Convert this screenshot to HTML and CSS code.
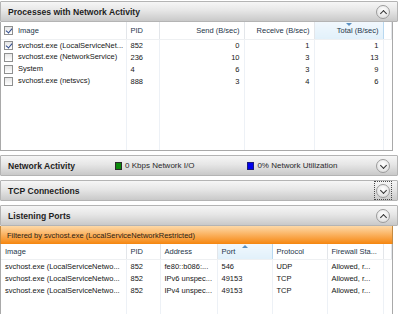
FILE: index.html
```html
<!DOCTYPE html>
<html lang="en">
  <head>
    <meta charset="UTF-8" />
    <title>Network</title>
    <link rel="stylesheet" href="styles.css">
  </head>
  <body>
    <div class="page">
      <div class="bar">
        <span class="title">Processes with Network Activity</span>
        <span class="toggle up"></span>
      </div>
      <div class="panel panel-top">
        <table class="grid grid-proc">
          <colgroup>
            <col style="width:125px"><col style="width:33px"><col style="width:85px"><col style="width:70px"><col style="width:69px"><col>
          </colgroup>
          <tr class="head">
            <th><span class="check on"></span>Image</th>
            <th>PID</th>
            <th class="num">Send (B/sec)</th>
            <th class="num">Receive (B/sec)</th>
            <th class="num sorted down">Total (B/sec)</th>
            <th></th>
          </tr>
          <tr>
            <td><span class="check on"></span>svchost.exe (LocalServiceNet...</td>
            <td>852</td><td class="num">0</td><td class="num">1</td><td class="num">1</td><td></td>
          </tr>
          <tr>
            <td><span class="check"></span>svchost.exe (NetworkService)</td>
            <td>236</td><td class="num">10</td><td class="num">3</td><td class="num">13</td><td></td>
          </tr>
          <tr>
            <td><span class="check"></span>System</td>
            <td>4</td><td class="num">6</td><td class="num">3</td><td class="num">9</td><td></td>
          </tr>
          <tr>
            <td><span class="check"></span>svchost.exe (netsvcs)</td>
            <td>888</td><td class="num">3</td><td class="num">4</td><td class="num">6</td><td></td>
          </tr>
          <tr class="fill">
            <td></td><td></td><td></td><td></td><td></td><td></td>
          </tr>
        </table>
      </div>

      <div class="bar bar-gap">
        <span class="title">Network Activity</span>
        <span class="legend legend-io"><i class="swatch green"></i>0 Kbps Network I/O</span>
        <span class="legend legend-util"><i class="swatch blue"></i>0% Network Utilization</span>
        <span class="toggle down"></span>
      </div>

      <div class="bar bar-gap">
        <span class="title">TCP Connections</span>
        <span class="focus-ring"></span>
        <span class="toggle down"></span>
      </div>

      <div class="bar bar-gap">
        <span class="title">Listening Ports</span>
        <span class="toggle up"></span>
      </div>
      <div class="filter">Filtered by svchost.exe (LocalServiceNetworkRestricted)</div>
      <div class="panel panel-bottom">
        <table class="grid grid-ports">
          <colgroup>
            <col style="width:125px"><col style="width:34px"><col style="width:57px"><col style="width:55px"><col style="width:55px"><col style="width:56px"><col>
          </colgroup>
          <tr class="head">
            <th>Image</th>
            <th>PID</th>
            <th>Address</th>
            <th class="sorted up">Port</th>
            <th>Protocol</th>
            <th>Firewall Sta...</th>
            <th></th>
          </tr>
          <tr>
            <td>svchost.exe (LocalServiceNetwo...</td><td>852</td><td>fe80::b086:...</td><td>546</td><td>UDP</td><td>Allowed, r...</td><td></td>
          </tr>
          <tr>
            <td>svchost.exe (LocalServiceNetwo...</td><td>852</td><td>IPv6 unspec...</td><td>49153</td><td>TCP</td><td>Allowed, r...</td><td></td>
          </tr>
          <tr>
            <td>svchost.exe (LocalServiceNetwo...</td><td>852</td><td>IPv4 unspec...</td><td>49153</td><td>TCP</td><td>Allowed, r...</td><td></td>
          </tr>
          <tr class="fill">
            <td></td><td></td><td></td><td></td><td></td><td></td><td></td>
          </tr>
        </table>
      </div>
    </div>
  </body>
</html>
```

FILE: styles.css
```css
* {
  margin: 0;
  padding: 0;
  box-sizing: border-box;
}

html, body {
  width: 400px;
  height: 314px;
  overflow: hidden;
  background-color: #ffffff;
}

body {
  font-family: 'Liberation Sans', Arial, sans-serif;
  font-size: 7.5px;
  color: #161616;
}

.page {
  display: flex;
  flex-direction: column;
  width: 398px;
  height: 314px;
  padding-top: 1px;
}

/* section header bars */
.bar {
  position: relative;
  display: flex;
  flex-shrink: 0;
  align-items: center;
  height: 21px;
  padding-left: 7px;
  border: 1px solid #b4b4b4;
  border-radius: 1px;
  background: linear-gradient(#f6f6f6, #e6e6e6 45%, #c9c9c9);
}

.bar-gap {
  margin-top: 4px;
}

.title {
  font-size: 8.6px;
  font-weight: bold;
  color: #1e1e1e;
}

.legend {
  display: flex;
  align-items: center;
  font-size: 8px;
  color: #2a2a2a;
}

.legend-io {
  margin-left: 40px;
}

.legend-util {
  margin-left: 53px;
}

.swatch {
  display: inline-block;
  width: 7px;
  height: 8px;
  margin-right: 3px;
  border: 1px solid #2b2b2b;
}

.swatch.green {
  background-color: #0b8a0b;
}

.swatch.blue {
  background-color: #0000ee;
  border-color: #1a1a7a;
}

.toggle {
  position: absolute;
  right: 7px;
  top: 3px;
  width: 14px;
  height: 14px;
  border-radius: 50%;
  border: 1px solid #9c9c9c;
  background: radial-gradient(circle at 50% 35%, #ffffff, #e4e4e4 70%, #cfcfcf);
}

.toggle::after {
  content: '';
  position: absolute;
  left: 4px;
  width: 4px;
  height: 4px;
  border-left: 1.5px solid #333;
  border-top: 1.5px solid #333;
}

.toggle.up::after {
  top: 4.5px;
  transform: rotate(45deg);
}

.toggle.down::after {
  top: 2.5px;
  transform: rotate(225deg);
}

.focus-ring {
  position: absolute;
  right: 5px;
  top: 0;
  width: 18px;
  height: 19px;
  border: 1px dotted #4a4a4a;
}

/* white content panels */
.panel {
  flex-shrink: 0;
  width: 393px;
  overflow: hidden;
  border: 1px solid #a9a9a9;
  border-top: none;
  background-color: #ffffff;
}

.panel-top {
  height: 129px;
}

.panel-bottom {
  flex: 1;
  border-bottom: none;
}

.filter {
  flex-shrink: 0;
  width: 393px;
  height: 18px;
  padding-left: 6px;
  display: flex;
  align-items: center;
  font-size: 7.5px;
  color: #2b2013;
  border-left: 1px solid #c58a40;
  border-right: 1px solid #c58a40;
  background: linear-gradient(#fdd9a8, #fbb464 45%, #f5860f);
}

/* tables */
.grid {
  width: 100%;
  border-collapse: collapse;
  table-layout: fixed;
}

.grid th,
.grid td {
  height: 12px;
  padding: 0 4px;
  text-align: left;
  white-space: nowrap;
  overflow: hidden;
  border-right: 1px solid #edf1f6;
  font-weight: normal;
  vertical-align: middle;
}

.grid td:last-child,
.grid th:last-child {
  border-right: none;
}

.grid .head th {
  position: relative;
  height: 17px;
  color: #25354a;
  border-right: 1px solid #e3e6ea;
  border-bottom: 1px solid #eef0f2;
}

.grid-ports .head th {
  height: 15px;
}

.grid-ports tr:nth-child(2) td {
  padding-top: 1px;
  height: 13px;
}

.grid .num {
  text-align: right;
}

.grid .head th.sorted {
  background: linear-gradient(#f1f8fd, #e1f0fa);
  border-left: 1px solid #b8d8f0;
  border-right: 1px solid #b8d8f0;
}

.grid .head th.sorted::before {
  content: '';
  position: absolute;
  left: 50%;
  top: 1px;
  margin-left: -3px;
  border-left: 3px solid transparent;
  border-right: 3px solid transparent;
}

.grid .head th.down::before {
  border-top: 3px solid #5a8fc0;
}

.grid .head th.up::before {
  border-bottom: 3px solid #5a8fc0;
}

.grid .fill td {
  height: 200px;
}

.check {
  display: inline-block;
  vertical-align: middle;
  position: relative;
  width: 9px;
  height: 9px;
  margin: -1px 5px 0 -1px;
  border: 1px solid #8e8f8f;
  background: linear-gradient(#e6e6e6, #ffffff);
}

.check.on::after {
  content: '';
  position: absolute;
  left: 2px;
  top: 0px;
  width: 3px;
  height: 5px;
  border-right: 1.5px solid #2f4a8c;
  border-bottom: 1.5px solid #2f4a8c;
  transform: rotate(40deg);
}
```
